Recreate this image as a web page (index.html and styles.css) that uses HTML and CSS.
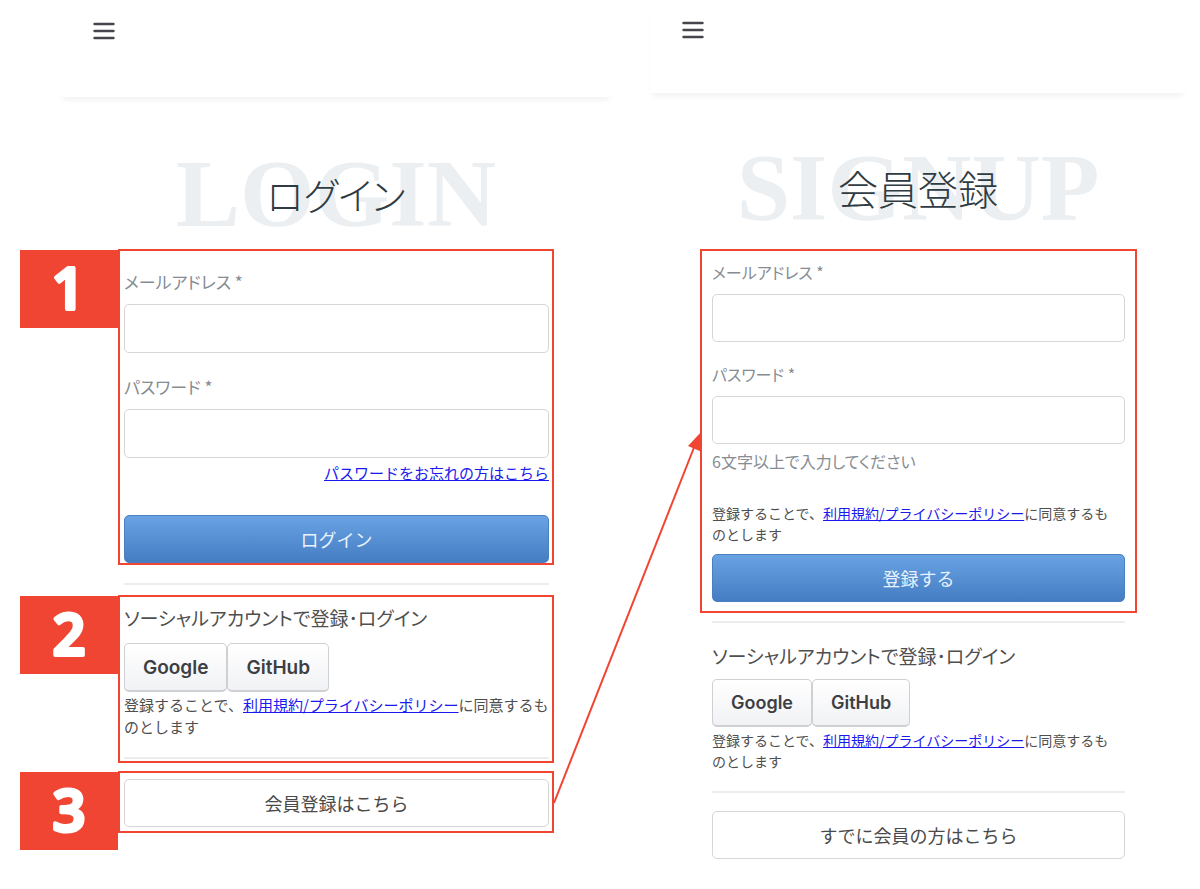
FILE: index.html
```html
<!DOCTYPE html>
<html lang="ja">
<head>
    <meta charset="UTF-8">
    <meta name="viewport" content="width=device-width, initial-scale=1.0">
    <title>ログイン・会員登録</title>
    <link rel="stylesheet" href="styles.css">
</head>
<body>
    <main class="screens">
        <!-- Login -->
        <section class="screen login">
            <header class="header">
                <button class="menu" type="button" aria-label="メニュー">
                    <svg width="22" height="18" viewBox="0 0 22 18"><path d="M1.5 2h19M1.5 9h19M1.5 16h19" stroke="#45454d" stroke-width="2.4" stroke-linecap="round"/></svg>
                </button>
            </header>
            <div class="title">
                <span class="title-en">LOGIN</span>
                <h1>ログイン</h1>
            </div>

            <form class="mark mark-form">
                <svg class="badge" viewBox="0 0 98 78"><text x="48" y="59">1</text></svg>
                <label for="login-email">メールアドレス *</label>
                <input type="email" id="login-email">
                <label for="login-password">パスワード *</label>
                <input type="password" id="login-password">
                <a class="forgot" href="#">パスワードをお忘れの方はこちら</a>
                <button class="submit" type="button">ログイン</button>
            </form>

            <hr>

            <div class="mark mark-social">
                <svg class="badge" viewBox="0 0 98 78"><text x="49" y="59">2</text></svg>
                <h2>ソーシャルアカウントで登録･ログイン</h2>
                <div class="social">
                    <button type="button">Google</button>
                    <button type="button">GitHub</button>
                </div>
                <p class="terms">登録することで、<a href="#">利用規約/プライバシーポリシー</a>に同意するものとします</p>
                <hr>
            </div>

            <div class="mark mark-switch">
                <svg class="badge" viewBox="0 0 98 78"><text x="49" y="59">3</text></svg>
                <button class="switch" type="button">会員登録はこちら</button>
            </div>
        </section>

        <!-- Sign up -->
        <section class="screen signup">
            <header class="header">
                <button class="menu" type="button" aria-label="メニュー">
                    <svg width="22" height="18" viewBox="0 0 22 18"><path d="M1.5 2h19M1.5 9h19M1.5 16h19" stroke="#45454d" stroke-width="2.4" stroke-linecap="round"/></svg>
                </button>
            </header>
            <div class="title">
                <span class="title-en">SIGNUP</span>
                <h1>会員登録</h1>
            </div>

            <form class="mark mark-form">
                <svg class="arrow" width="148" height="374" viewBox="0 0 148 374"><path d="M0 372L141 14" stroke="#f14533" stroke-width="2"/><path d="M148 0v21l-14-6z" fill="#f14533"/></svg>
                <label for="signup-email">メールアドレス *</label>
                <input type="email" id="signup-email">
                <label for="signup-password">パスワード *</label>
                <input type="password" id="signup-password">
                <p class="hint">6文字以上で入力してください</p>
                <p class="terms">登録することで、<a href="#">利用規約/プライバシーポリシー</a>に同意するものとします</p>
                <button class="submit" type="button">登録する</button>
            </form>

            <div class="plain">
                <hr>
                <h2>ソーシャルアカウントで登録･ログイン</h2>
                <div class="social">
                    <button type="button">Google</button>
                    <button type="button">GitHub</button>
                </div>
                <p class="terms">登録することで、<a href="#">利用規約/プライバシーポリシー</a>に同意するものとします</p>
                <hr>
                <button class="switch" type="button">すでに会員の方はこちら</button>
            </div>
        </section>
    </main>
</body>
</html>
```
FILE: styles.css
```css
* {
    box-sizing: border-box;
}
body {
    margin: 0;
    background: #fff;
    color: #4f4f4f;
    font-family: "Noto Sans CJK JP", sans-serif;
}
h1, h2, p {
    margin: 0;
    font-weight: normal;
}
button, input {
    display: block;
    font-family: inherit;
}
a {
    color: #1a1aee;
}
hr {
    height: 2px;
    margin: 0;
    border: none;
    background: #eceeee;
}
.screens {
    display: grid;
    grid-template-columns: 552fr 536fr;
    gap: 38px;
    padding: 0 14px 0 60px;
}

/* Header */
.header {
    height: 97px;
    padding: 22px 33px;
    box-shadow: 0 6px 6px -3px rgba(0, 0, 0, 0.06);
}
.signup .header {
    height: 93px;
    padding: 21px 32px;
}
.menu {
    padding: 0;
    border: none;
    background: none;
    cursor: pointer;
}
.menu svg {
    display: block;
}

/* Title */
.title {
    display: grid;
    place-items: center;
    padding: 49px 0 7px;
}
.signup .title {
    padding: 47px 0 13px;
}
.title-en, .title h1 {
    grid-area: 1 / 1;
}
.title-en {
    color: #ebeff2;
    font: bold 96px/96px "Liberation Serif", serif;
}
.title h1 {
    color: #2f3b43;
    font-size: 40px;
    font-weight: 300;
    line-height: 48px;
    font-feature-settings: "palt";
}
.login .title h1 {
    font-size: 38px;
}

/* Numbered areas */
.mark {
    position: relative;
    margin: 0 58px;
    padding: 0 3px 0 4px;
    border: 2px solid #f14533;
}
.signup .mark {
    margin: 0 49px 0 50px;
    padding: 9px 10px;
}
.badge {
    position: absolute;
    top: -1px;
    right: 100%;
    width: 98px;
    height: 78px;
    margin-right: 2px;
    background: #f14533;
}
.badge text {
    fill: #fff;
    stroke: #fff;
    stroke-width: 4px;
    stroke-linejoin: round;
    font: 600 57px "Open Sans", sans-serif;
    text-anchor: middle;
}
.arrow {
    position: absolute;
    top: 180px;
    right: 100%;
}

/* Form */
.login .mark-form {
    padding-top: 19px;
}
label {
    display: block;
    margin-bottom: 10px;
    color: #868c92;
    font-size: 16px;
    line-height: 24px;
    font-feature-settings: "palt";
}
.login label {
    font-size: 17px;
}
input {
    width: 100%;
    height: 49px;
    padding: 0 12px;
    border: 1px solid #d6d6d6;
    border-radius: 5px;
    background: #fff;
    font-size: 18px;
}
input + label {
    margin-top: 22px;
}
.signup input {
    height: 48px;
}
.signup input + label {
    margin-top: 20px;
}
.forgot {
    display: block;
    margin: 4px 0 31px;
    font-size: 15px;
    line-height: 22px;
    text-align: right;
}
.hint {
    margin: 5px 0 30px;
    color: #868c92;
    font-size: 16px;
    line-height: 24px;
    font-feature-settings: "palt";
}
.submit {
    width: 100%;
    height: 48px;
    border: 1px solid #4a80bd;
    border-radius: 5px;
    background: linear-gradient(#69a3e4, #447dc2);
    color: #e9f2fc;
    font-size: 18px;
    cursor: pointer;
}
.signup .submit {
    margin-top: 9px;
}
.terms {
    font-size: 15px;
    line-height: 22px;
}
.signup .terms {
    padding-right: 10px;
    font-size: 14px;
    line-height: 21px;
}

/* Social login */
.login > hr {
    margin: 18px 63px 10px 64px;
}
.mark-social {
    padding: 8px 3px 2px 4px;
}
h2 {
    margin-bottom: 12px;
    font-size: 19px;
    line-height: 26px;
    font-feature-settings: "palt";
}
.social {
    display: flex;
    margin-bottom: 2px;
}
.social button {
    height: 49px;
    padding: 0 18px;
    border: 1px solid #cfd0d2;
    border-bottom-width: 2px;
    border-radius: 5px;
    background: linear-gradient(#fff, #f1f2f5);
    color: #3d3f43;
    font: 600 19px Inter, sans-serif;
    cursor: pointer;
}
.mark-social .terms {
    margin-bottom: 19px;
}
.plain {
    margin: 0 61px 0 62px;
    padding-top: 8px;
}
.plain h2 {
    margin: 20px 0 10px;
}
.plain .social {
    margin-bottom: 3px;
}
.plain .social button {
    height: 48px;
    font-size: 18px;
}
.plain .terms {
    margin-bottom: 19px;
}

/* Switch between the two screens */
.mark-switch {
    margin-top: 8px;
    padding: 6px 3px 4px 4px;
}
.switch {
    width: 100%;
    height: 48px;
    border: 1px solid #d6d6d6;
    border-radius: 5px;
    background: #fff;
    color: #4a4a4a;
    font-size: 18px;
    cursor: pointer;
}
.plain .switch {
    margin-top: 18px;
}
```
